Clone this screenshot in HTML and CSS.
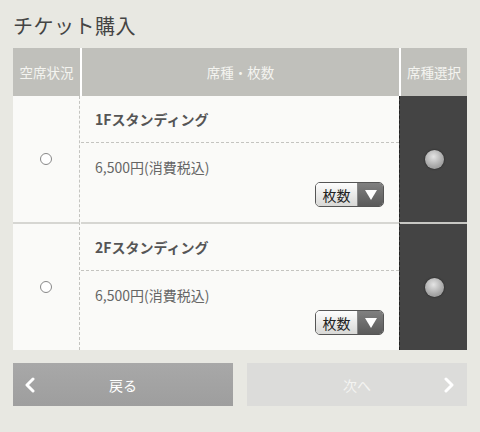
FILE: index.html
```html
<!DOCTYPE html>
<html lang="ja">
<head>
  <meta charset="UTF-8" />
  <title>チケット購入</title>
  <link rel="stylesheet" href="styles.css">
</head>
<body>
  <div class="page">
    <h1 class="title">チケット購入</h1>

    <div class="seats">
      <div class="head head-status">空席状況</div>
      <div class="head head-type">席種・枚数</div>
      <div class="head head-pick">席種選択</div>

      <div class="cell status"><span class="radio"></span></div>
      <div class="cell info">
        <div class="name">1Fスタンディング</div>
        <div class="price">
          <p>6,500円(消費税込)</p>
          <div class="qty"><span class="qty-label">枚数</span><span class="qty-arrow"></span></div>
        </div>
      </div>
      <div class="cell pick"><span class="ball"></span></div>

      <div class="cell status"><span class="radio"></span></div>
      <div class="cell info">
        <div class="name">2Fスタンディング</div>
        <div class="price">
          <p>6,500円(消費税込)</p>
          <div class="qty"><span class="qty-label">枚数</span><span class="qty-arrow"></span></div>
        </div>
      </div>
      <div class="cell pick"><span class="ball"></span></div>
    </div>

    <div class="nav">
      <button class="nav-btn back">
        <svg class="chev left" width="12" height="16" viewBox="0 0 12 16"><path d="M9 2 L3 8 L9 14" fill="none" stroke="#fff" stroke-width="3" stroke-linecap="round" stroke-linejoin="round"/></svg>
        戻る
      </button>
      <button class="nav-btn next">
        次へ
        <svg class="chev right" width="12" height="16" viewBox="0 0 12 16"><path d="M3 2 L9 8 L3 14" fill="none" stroke="#fff" stroke-width="3" stroke-linecap="round" stroke-linejoin="round"/></svg>
      </button>
    </div>
  </div>
</body>
</html>
```

FILE: styles.css
```css
* { margin: 0; padding: 0; box-sizing: border-box; }
html, body {
  height: 100%;
  background: #e8e8e2;
  font-family: "Noto Sans CJK JP", "Noto Sans", sans-serif;
  color: #555;
}
.page {
  padding: 0 13px;
}
.title {
  font-size: 20px;
  font-weight: normal;
  color: #444;
  line-height: 48px;
  height: 48px;
  padding-top: 2px;
  letter-spacing: 0.5px;
}

.seats {
  display: grid;
  grid-template-columns: 67px 1fr 68px;
  grid-template-rows: 48px 126px 128px;
  background: #fafaf8;
}
.head {
  background: #c0c0bb;
  color: #f4f4f0;
  font-size: 13.5px;
  display: flex;
  align-items: center;
  justify-content: center;
}
.head-type { border-left: 2px solid #fff; }
.head-pick { border-left: 2px solid #fff; }

.cell {
  border-top: 2px solid #d6d6d2;
}
.seats .cell:nth-child(4),
.seats .cell:nth-child(5),
.seats .cell:nth-child(6) { border-top: none; }

.status {
  display: flex;
  align-items: center;
  justify-content: center;
  border-right: 1px dashed #c4c4c0;
}
.radio {
  width: 12px;
  height: 12px;
  border: 1px solid #888;
  border-radius: 50%;
  background: #fff;
}

.info {
  display: flex;
  flex-direction: column;
  margin-left: 1px;
}
.name {
  height: 47px;
  display: flex;
  align-items: center;
  padding-left: 14px;
  font-size: 14px;
  font-weight: bold;
  color: #555;
  border-bottom: 1px dashed #c4c4c0;
}
.price {
  flex: 1;
  padding: 14px 15px 15px 14px;
  display: flex;
  flex-direction: column;
  justify-content: space-between;
}
.price p {
  font-size: 14px;
  color: #666;
}
.qty {
  align-self: flex-end;
  display: flex;
  width: 69px;
  height: 25px;
  border: 1px solid #555;
  border-radius: 5px;
  overflow: hidden;
}
.qty-label {
  flex: 1;
  background: linear-gradient(#fdfdfd, #d8d8d6);
  color: #222;
  font-size: 14px;
  display: flex;
  align-items: center;
  justify-content: center;
  border-right: 1px solid #888;
}
.qty-arrow {
  width: 25px;
  background: linear-gradient(#808080, #5a5a5a);
  display: flex;
  align-items: center;
  justify-content: center;
}
.qty-arrow::after {
  content: "";
  border-left: 6px solid transparent;
  border-right: 6px solid transparent;
  border-top: 10px solid #fff;
}

.pick {
  background: #444;
  border-left: 1px dashed #222;
  border-top-color: #c8c8c4;
  display: flex;
  align-items: center;
  justify-content: center;
}
.ball {
  width: 19px;
  height: 19px;
  border-radius: 50%;
  background: radial-gradient(circle at 45% 35%, #e4e4e4, #a8a8a8 60%, #8a8a8a);
  box-shadow: 0 0 2px rgba(0, 0, 0, 0.6);
  margin-left: 1px;
}

.nav {
  display: flex;
  gap: 14px;
  margin-top: 13px;
}
.nav-btn {
  flex: 1;
  height: 43px;
  border: none;
  font-family: inherit;
  font-size: 14px;
  color: #fff;
  position: relative;
  display: flex;
  align-items: center;
  justify-content: center;
}
.back {
  background: linear-gradient(#a8a8a8, #9e9e9e);
}
.next {
  background: #dcdcda;
  color: #f4f4f2;
}
.chev {
  position: absolute;
  top: 14px;
}
.chev.left { left: 11px; }
.chev.right { right: 12px; }
```
